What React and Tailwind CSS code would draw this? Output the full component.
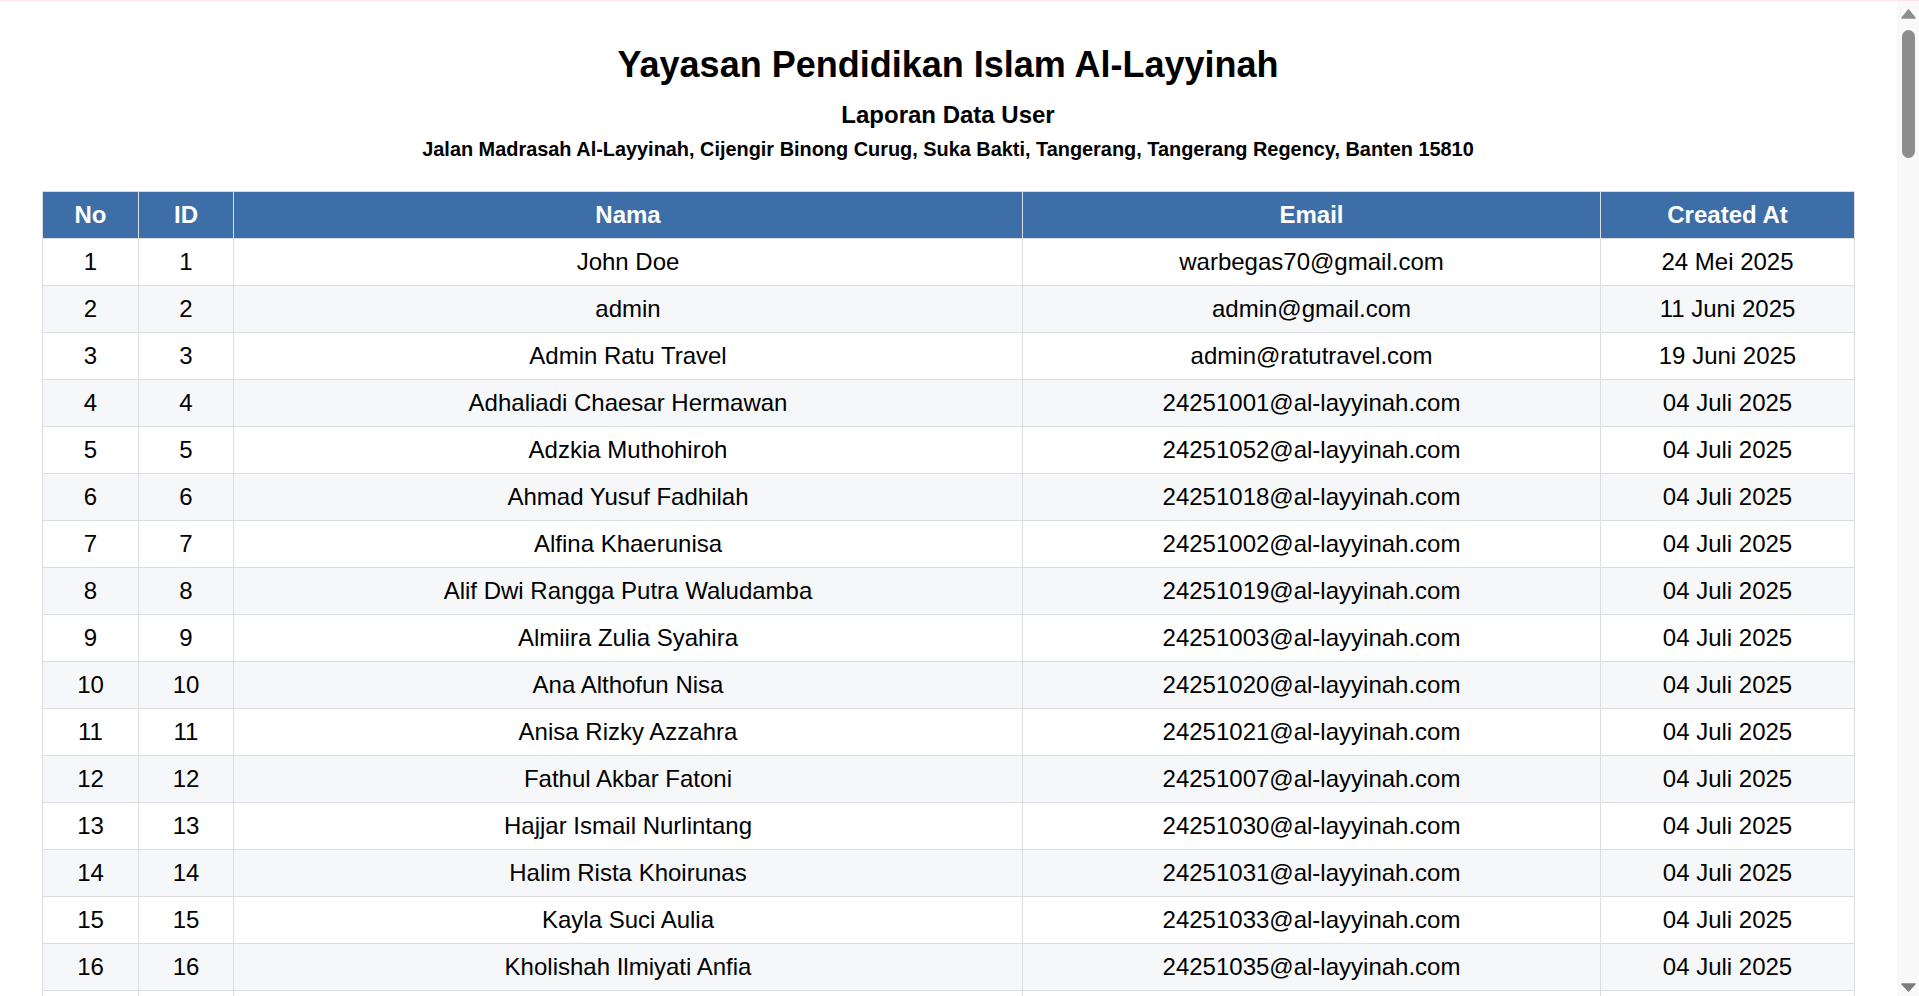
const users = [
  ["John Doe", "warbegas70@gmail.com", "24 Mei 2025"],
  ["admin", "admin@gmail.com", "11 Juni 2025"],
  ["Admin Ratu Travel", "admin@ratutravel.com", "19 Juni 2025"],
  ["Adhaliadi Chaesar Hermawan", "24251001@al-layyinah.com", "04 Juli 2025"],
  ["Adzkia Muthohiroh", "24251052@al-layyinah.com", "04 Juli 2025"],
  ["Ahmad Yusuf Fadhilah", "24251018@al-layyinah.com", "04 Juli 2025"],
  ["Alfina Khaerunisa", "24251002@al-layyinah.com", "04 Juli 2025"],
  ["Alif Dwi Rangga Putra Waludamba", "24251019@al-layyinah.com", "04 Juli 2025"],
  ["Almiira Zulia Syahira", "24251003@al-layyinah.com", "04 Juli 2025"],
  ["Ana Althofun Nisa", "24251020@al-layyinah.com", "04 Juli 2025"],
  ["Anisa Rizky Azzahra", "24251021@al-layyinah.com", "04 Juli 2025"],
  ["Fathul Akbar Fatoni", "24251007@al-layyinah.com", "04 Juli 2025"],
  ["Hajjar Ismail Nurlintang", "24251030@al-layyinah.com", "04 Juli 2025"],
  ["Halim Rista Khoirunas", "24251031@al-layyinah.com", "04 Juli 2025"],
  ["Kayla Suci Aulia", "24251033@al-layyinah.com", "04 Juli 2025"],
  ["Kholishah Ilmiyati Anfia", "24251035@al-layyinah.com", "04 Juli 2025"],
]

function ScrollBar() {
  return (
    <div className="w-[22px] shrink-0 bg-[#f9f9f9] flex flex-col items-center pt-[8px] pb-[4px]">
      <svg width="15" height="10" viewBox="0 0 15 10">
        <path d="M7.5 1 L14 9 L1 9 Z" fill="#8d8d8d" stroke="#8d8d8d" strokeWidth="1.5" strokeLinejoin="round" />
      </svg>
      <div className="mt-[11px] w-[13px] h-[128px] rounded-full bg-[#8d8d8d]"></div>
      <div className="flex-1"></div>
      <svg width="15" height="9" viewBox="0 0 15 9">
        <path d="M1 1 L14 1 L7.5 8 Z" fill="#7d7d7d" stroke="#7d7d7d" strokeWidth="1.5" strokeLinejoin="round" />
      </svg>
    </div>
  )
}

function App() {
  return (
    <div
      className="h-screen overflow-hidden flex bg-white text-black border-t border-[#fbe3e7]"
      style={{ fontFamily: '"Liberation Sans", Arial, sans-serif' }}
    >
      <div className="flex-1 min-w-0 overflow-hidden pl-[42px] pr-[43px] pt-[43px]">
        <div className="text-center">
          <h1 className="text-[36px] leading-[41px] font-bold">
            Yayasan Pendidikan Islam Al-Layyinah
          </h1>
          <h2 className="mt-[16px] text-[24px] leading-[28px] font-bold">
            Laporan Data User
          </h2>
          <p className="mt-[9px] text-[19.9px] leading-[23px] font-bold">
            Jalan Madrasah Al-Layyinah, Cijengir Binong Curug, Suka Bakti, Tangerang, Tangerang Regency, Banten 15810
          </p>
        </div>

        <table className="mt-[30px] w-full table-fixed border-collapse text-[24px] leading-[28px] text-center">
          <colgroup>
            <col className="w-[96px]" />
            <col className="w-[95px]" />
            <col className="w-[789px]" />
            <col className="w-[578px]" />
            <col className="w-[254px]" />
          </colgroup>
          <thead>
            <tr className="bg-[#3e6ea7] text-white">
              <th className="border border-[#dcdde3] py-[9px] font-bold">No</th>
              <th className="border border-[#dcdde3] py-[9px] font-bold">ID</th>
              <th className="border border-[#dcdde3] py-[9px] font-bold">Nama</th>
              <th className="border border-[#dcdde3] py-[9px] font-bold">Email</th>
              <th className="border border-[#dcdde3] py-[9px] font-bold">Created At</th>
            </tr>
          </thead>
          <tbody>
            {users.map((u, i) => (
              <tr key={i} className={i % 2 === 1 ? "bg-[#f6f7f9]" : "bg-white"}>
                <td className="border border-[#dcdde3] py-[9px]">{i + 1}</td>
                <td className="border border-[#dcdde3] py-[9px]">{i + 1}</td>
                <td className="border border-[#dcdde3] py-[9px]">{u[0]}</td>
                <td className="border border-[#dcdde3] py-[9px]">{u[1]}</td>
                <td className="border border-[#dcdde3] py-[9px]">{u[2]}</td>
              </tr>
            ))}
            {/* baris berikutnya, hanya terlihat bagian atasnya */}
            <tr className="bg-white h-[47px]">
              <td className="border border-[#dcdde3]"></td>
              <td className="border border-[#dcdde3]"></td>
              <td className="border border-[#dcdde3]"></td>
              <td className="border border-[#dcdde3]"></td>
              <td className="border border-[#dcdde3]"></td>
            </tr>
          </tbody>
        </table>
      </div>
      <ScrollBar />
    </div>
  )
}

export default App
